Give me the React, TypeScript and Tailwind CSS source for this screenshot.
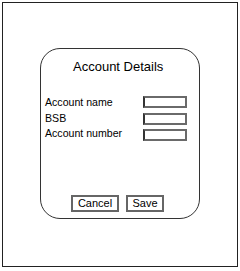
export default function App() {
  const fields = ["Account name", "BSB", "Account number"];

  return (
    <div className="w-[240px] h-[271px] bg-white pl-[2px] pt-[2px] font-['Liberation_Sans',Arial,sans-serif] text-black">
      <div className="w-[236px] h-[265px] border border-[#222] pl-[37px] pt-[45px]">
        <div className="w-[160px] h-[171px] rounded-[20px] border border-[#333] flex flex-col">
          <h1 className="pl-[32px] pt-[10px] text-[13px] leading-[15px] font-normal">Account Details</h1>

          <div className="mt-[21px] flex">
            <div className="pl-[4px] w-[102px] flex flex-col text-[10.6px] leading-[15.5px]">
              {fields.map((label) => (
                <span key={label}>{label}</span>
              ))}
            </div>
            <div className="pt-[1px] flex flex-col gap-[4.5px]">
              {fields.map((label) => (
                <input
                  key={label}
                  aria-label={label}
                  className="w-[44px] h-[12px] border-2 border-[#6a6a6a] border-l-[#333] bg-white outline-none"
                />
              ))}
            </div>
          </div>

          <div className="mt-auto mb-[6px] pl-[30px] flex gap-[7px]">
            <button className="w-[48px] h-[17px] border-2 border-[#666] text-[11px] leading-[13px] bg-white">
              Cancel
            </button>
            <button className="w-[38px] h-[17px] border-2 border-[#666] text-[11px] leading-[13px] bg-white">
              Save
            </button>
          </div>
        </div>
      </div>
    </div>
  );
}
